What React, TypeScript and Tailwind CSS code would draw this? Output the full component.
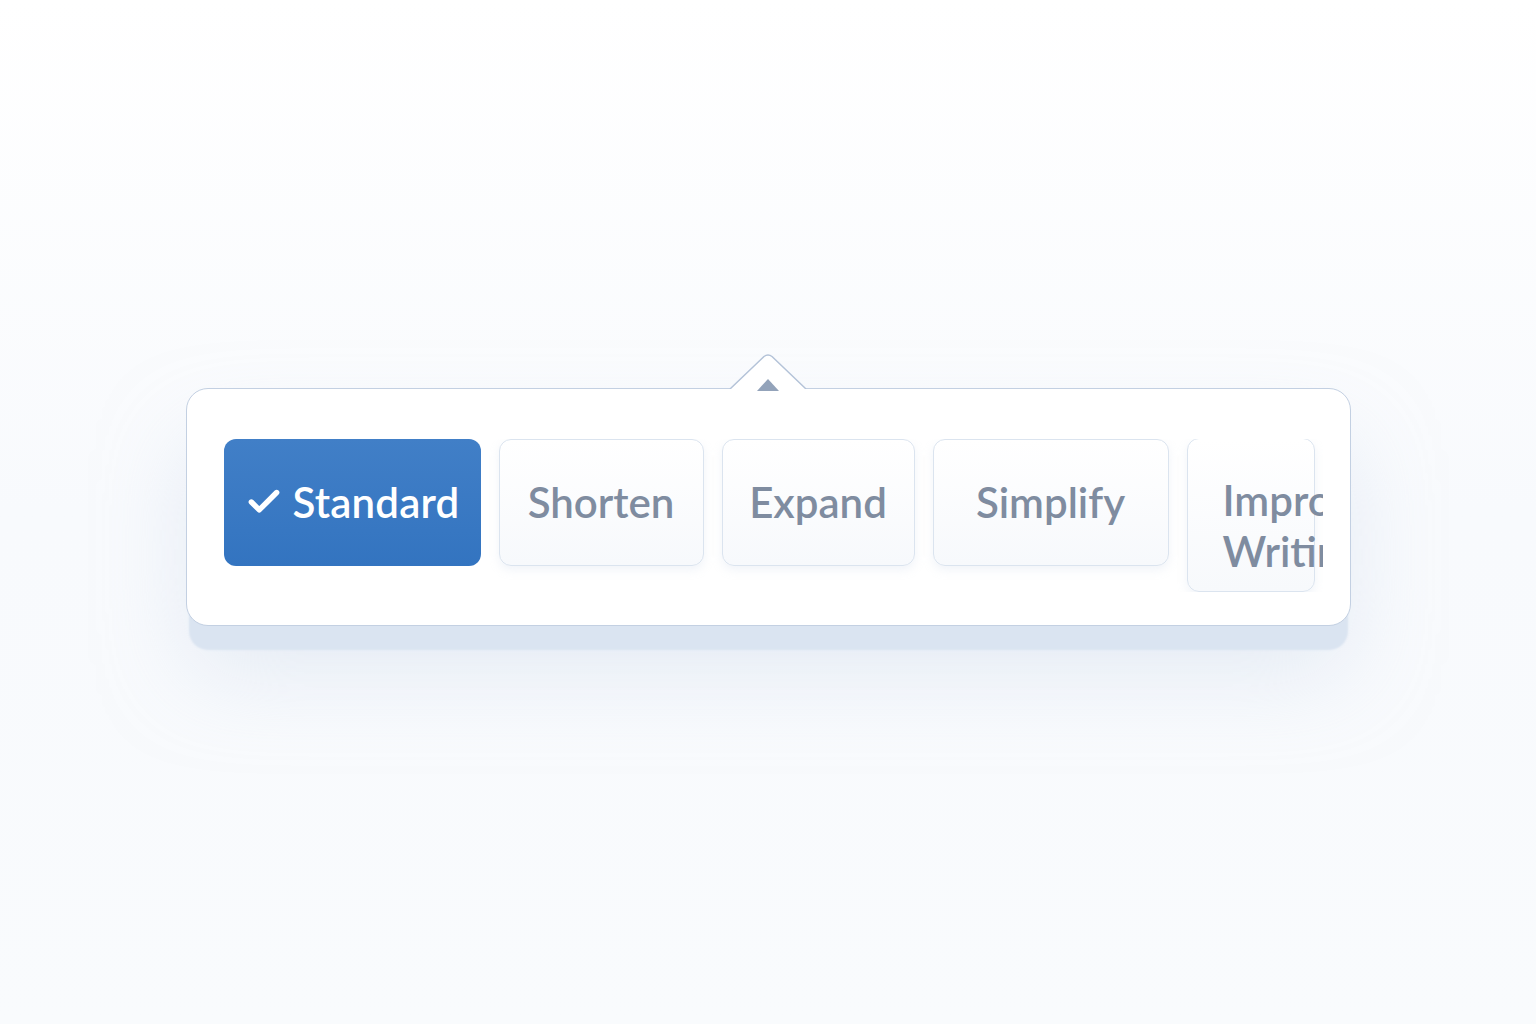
import { Check } from 'lucide-react'

const OPTIONS = [
  { label: 'Shorten', w: 'w-[205px]' },
  { label: 'Expand', w: 'w-[193px]' },
  { label: 'Simplify', w: 'w-[236px]' },
]

function Caret() {
  // pointer above the popover, covers the border line under it
  return (
    <svg
      className="absolute left-1/2 top-[-35px] -translate-x-1/2"
      width="80"
      height="40"
      viewBox="0 0 80 40"
    >
      <path d="M2 35 L36 2.5 Q40 -0.5 44 2.5 L78 35 Z" fill="#ffffff" />
      <path
        d="M2 35 L36 2.5 Q40 -0.5 44 2.5 L78 35"
        fill="none"
        stroke="#b4c3d8"
        strokeWidth="1.5"
        strokeLinejoin="round"
      />
      <rect x="0" y="35" width="80" height="5" fill="#ffffff" />
      <path d="M29 37 L40 25 L51 37 Z" fill="#93a3ba" />
    </svg>
  )
}

export default function App() {
  return (
    <div
      className="w-full h-[1024px] flex items-start justify-center bg-gradient-to-b from-[#ffffff] via-[#f8fafd] to-[#f9fbfd]"
      style={{ fontFamily: 'Lato, "Open Sans", sans-serif' }}
    >
      <div className="mt-[388px] relative w-[1165px] h-[238px] rounded-[22px] border-[1.5px] border-[#c3d0e2] bg-white shadow-[0_27px_2px_-3px_rgba(218,228,241,1),0_50px_90px_-10px_rgba(205,218,236,0.5)] pl-[37px] pr-[27px] pt-[50px]">
        <Caret />
        <div className="flex items-start gap-[18px] overflow-hidden">
          <button className="shrink-0 w-[257px] h-[127px] rounded-[12px] bg-gradient-to-b from-[#417fc7] to-[#3374c0] flex items-center justify-start pl-[21px] gap-[10px] text-white">
            <Check size={38} strokeWidth={3.4} className="-mt-[2px]" />
            <span className="text-[42px] font-semibold tracking-[0.2px]">Standard</span>
          </button>
          {OPTIONS.map((o) => (
            <button
              key={o.label}
              className={`shrink-0 ${o.w} h-[127px] rounded-[12px] border border-[#dbe4ef] bg-gradient-to-b from-[#ffffff] to-[#f7f9fc] shadow-[0_4px_10px_rgba(200,212,230,0.25)] flex items-center justify-center text-[42px] font-semibold text-[#7f8ca0]`}
            >
              {o.label}
            </button>
          ))}
          <button className="shrink-0 w-[128px] h-[154px] -mt-[1px] rounded-[12px] border border-[#dbe4ef] bg-gradient-to-b from-[#ffffff] to-[#f7f9fc] shadow-[0_4px_10px_rgba(200,212,230,0.25)] pl-[35px] pt-[22px] text-left text-[42px] leading-[51px] font-semibold text-[#7f8ca0] whitespace-nowrap">
            Improve
            <br />
            Writing
          </button>
        </div>
      </div>
    </div>
  )
}
